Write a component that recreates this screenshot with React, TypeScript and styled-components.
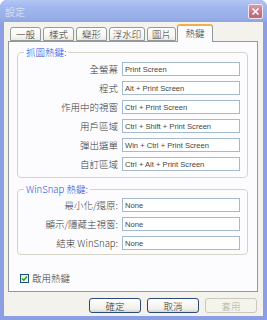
import React, { FC } from 'react';
import styled, { createGlobalStyle } from 'styled-components';

const GlobalStyle = createGlobalStyle`
  html, body {
    margin: 0;
    padding: 0;
  }
  body {
    font-family: "Liberation Sans", "Noto Sans CJK TC", sans-serif;
  }
`;

const CJK = `"Noto Sans CJK TC", "Liberation Sans", sans-serif`;

const Window = styled.div`
  width: 267px;
  height: 320px;
  box-sizing: border-box;
  display: flex;
  flex-direction: column;
  background: #8c9fe2;
  border-radius: 7px 7px 0 0;
  overflow: hidden;
`;

const TitleBar = styled.div`
  height: 22px;
  flex: none;
  display: flex;
  align-items: center;
  justify-content: space-between;
  padding: 0 4px 0 5px;
  background: linear-gradient(180deg, #b3c7f4 0%, #a2b8ee 30%, #97aee8 80%, #8ea6e4 100%);
`;

const Title = styled.span`
  font-family: ${CJK};
  font-size: 10px;
  font-weight: 300;
  color: #e8eefc;
`;

const CloseButton = styled.div`
  width: 13px;
  height: 13px;
  border: 1px solid #f2e6ea;
  border-radius: 2px;
  background: linear-gradient(180deg, #d89aa8 0%, #c37686 60%, #b9697b 100%);
  display: flex;
  align-items: center;
  justify-content: center;
`;

const Frame = styled.div`
  flex: 1;
  display: flex;
  flex-direction: column;
  margin: 0 4px 4px 4px;
  background: #f3f2ec;
  padding: 2px 5px 0 4px;
`;

const TabRow = styled.div`
  height: 17px;
  display: flex;
  align-items: flex-end;
  padding-left: 2px;
  position: relative;
  z-index: 1;
`;

const Tab = styled.div<{ active?: boolean; w: number }>`
  box-sizing: border-box;
  width: ${({ w }) => w}px;
  height: ${({ active }) => (active ? 18 : 14)}px;
  margin: ${({ active }) => (active ? '0 0 -1px -1px' : '0 2px 0 0')};
  border: 1px solid #919b9c;
  border-bottom: ${({ active }) => (active ? 'none' : '1px solid #919b9c')};
  border-top: ${({ active }) => (active ? '2px solid #f4b044' : '1px solid #919b9c')};
  border-radius: 3px 3px 0 0;
  background: ${({ active }) =>
    active ? '#fcfcfe' : 'linear-gradient(180deg, #ffffff 0%, #f6f5f0 70%, #e9e8e1 100%)'};
  font-family: ${CJK};
  font-size: 9.5px;
  font-weight: 300;
  color: #333;
  display: flex;
  align-items: center;
  justify-content: center;
  padding-bottom: ${({ active }) => (active ? 2 : 0)}px;
`;

const Panel = styled.div`
  box-sizing: border-box;
  height: 251px;
  border: 1px solid #919b9c;
  background: #fcfcfe;
  padding: 4px 9px 0 8px;
  display: flex;
  flex-direction: column;
`;

const Group = styled.fieldset<{ pt: number; pb: number }>`
  margin: 0;
  border: 1px solid #d5d3c5;
  border-radius: 4px;
  padding: ${({ pt, pb }) => `${pt}px 7px ${pb}px 8px`};
  display: grid;
  grid-template-columns: 1fr 118px;
  column-gap: 4px;
  row-gap: 5px;
  & + & {
    margin-top: 5px;
  }
`;

const Legend = styled.legend`
  font-family: ${CJK};
  font-size: 9.5px;
  font-weight: 300;
  line-height: 12px;
  color: #1d4fd8;
  padding: 0 2px;
  margin-left: -2px;
`;

const Label = styled.label`
  font-family: ${CJK};
  font-size: 9.5px;
  font-weight: 300;
  color: #3a3a3a;
  text-align: right;
  line-height: 14px;
  white-space: nowrap;
`;

const Field = styled.div`
  box-sizing: border-box;
  height: 14px;
  border: 1px solid #a5b9cf;
  background: #fff;
  font-family: "Liberation Sans", sans-serif;
  font-size: 7.6px;
  color: #444;
  padding-left: 2px;
  display: flex;
  align-items: center;
`;

const CheckRow = styled.div`
  display: flex;
  align-items: center;
  gap: 3px;
  margin-top: auto;
  margin-bottom: 6px;
  padding-left: 3px;
`;

const CheckBox = styled.div`
  box-sizing: border-box;
  width: 9px;
  height: 9px;
  border: 1px solid #1c5180;
  background: linear-gradient(135deg, #e4e3dc 0%, #ffffff 100%);
  display: flex;
  align-items: center;
  justify-content: center;
`;

const Footer = styled.div`
  height: 24px;
  display: flex;
  justify-content: flex-end;
  align-items: flex-start;
  gap: 6px;
  padding: 6px 1px 0 0;
  box-sizing: border-box;
`;

const Button = styled.div<{ disabled?: boolean }>`
  box-sizing: border-box;
  width: 52px;
  height: 15px;
  border: 1px solid ${({ disabled }) => (disabled ? '#cac8bb' : '#2b4a76')};
  border-radius: 3px;
  background: ${({ disabled }) =>
    disabled ? '#f5f4ea' : 'linear-gradient(180deg, #ffffff 0%, #f1f0ea 75%, #dcd8cc 100%)'};
  color: ${({ disabled }) => (disabled ? '#b3b0a2' : '#333')};
  font-family: ${CJK};
  font-size: 9.5px;
  font-weight: 300;
  display: flex;
  align-items: center;
  justify-content: center;
`;

const tabs = [
  { name: '一般', w: 31 },
  { name: '樣式', w: 31 },
  { name: '變形', w: 31 },
  { name: '浮水印', w: 36 },
  { name: '圖片', w: 29 },
  { name: '熱鍵', w: 36, active: true },
];

const captureKeys = [
  ['全螢幕', 'Print Screen'],
  ['程式', 'Alt + Print Screen'],
  ['作用中的視窗', 'Ctrl + Print Screen'],
  ['用戶區域', 'Ctrl + Shift + Print Screen'],
  ['彈出選單', 'Win + Ctrl + Print Screen'],
  ['自訂區域', 'Ctrl + Alt + Print Screen'],
];

const appKeys = [
  ['最小化/還原:', 'None'],
  ['顯示/隱藏主視窗:', 'None'],
  ['結束 WinSnap:', 'None'],
];

const App: FC = () => (
  <>
    <GlobalStyle />
    <Window>
      <TitleBar>
        <Title>設定</Title>
        <CloseButton>
          <svg width="9" height="9" viewBox="0 0 9 9">
            <path d="M1.5 1.5 L7.5 7.5 M7.5 1.5 L1.5 7.5" stroke="#fff" strokeWidth="1.6" />
          </svg>
        </CloseButton>
      </TitleBar>
      <Frame>
        <TabRow>
          {tabs.map((t) => (
            <Tab key={t.name} w={t.w} active={t.active}>
              {t.name}
            </Tab>
          ))}
        </TabRow>
        <Panel>
          <Group pt={4} pb={6}>
            <Legend>抓圖熱鍵:</Legend>
            {captureKeys.map(([label, value]) => (
              <React.Fragment key={label}>
                <Label>{label}</Label>
                <Field>{value}</Field>
              </React.Fragment>
            ))}
          </Group>
          <Group pt={3} pb={4}>
            <Legend>WinSnap 熱鍵:</Legend>
            {appKeys.map(([label, value]) => (
              <React.Fragment key={label}>
                <Label>{label}</Label>
                <Field>{value}</Field>
              </React.Fragment>
            ))}
          </Group>
          <CheckRow>
            <CheckBox>
              <svg width="7" height="7" viewBox="0 0 7 7">
                <path d="M1 3.5 L2.8 5.3 L6 1.5" stroke="#21a121" strokeWidth="1.4" fill="none" />
              </svg>
            </CheckBox>
            <Label>啟用熱鍵</Label>
          </CheckRow>
        </Panel>
        <Footer>
          <Button>確定</Button>
          <Button>取消</Button>
          <Button disabled>套用</Button>
        </Footer>
      </Frame>
    </Window>
  </>
);

export default App;
